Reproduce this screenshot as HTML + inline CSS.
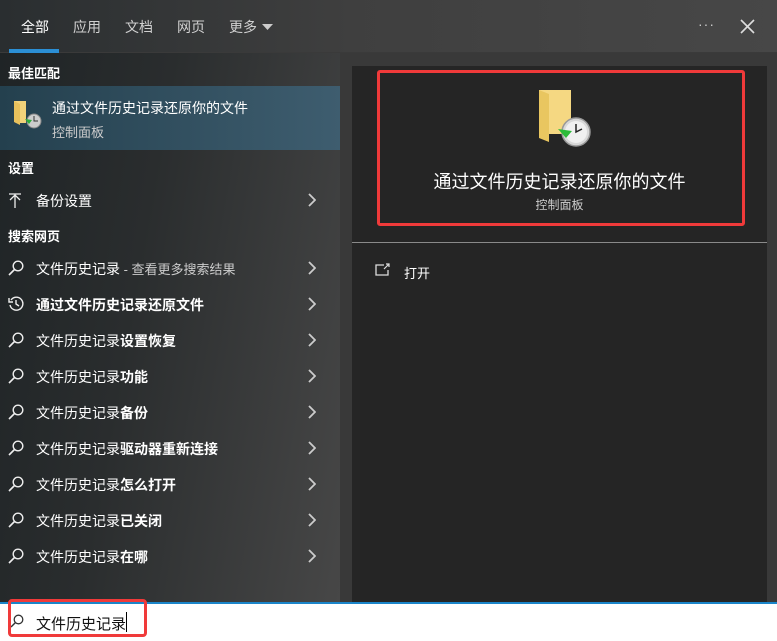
<!DOCTYPE html>
<html><head><meta charset="utf-8"><style>
*{margin:0;padding:0;box-sizing:border-box}
body{width:777px;height:641px;overflow:hidden;background:#2e2e2e;font-family:"Liberation Sans","Noto Sans CJK SC",sans-serif;color:#fff;position:relative;font-size:14px}
.top{position:absolute;left:0;top:0;width:777px;height:53px;background:linear-gradient(90deg,#2a2e30 0%,#3f3f3f 45%,#474747 100%);border-bottom:1px solid #3a3a3a}
.tab{position:absolute;top:17px;font-size:14px;color:#d0d0d0}
.left{position:absolute;left:0;top:53px;width:340px;height:549px;background:linear-gradient(100deg,#1f2426 0%,#2a2d2e 40%,#474747 100%)}
.right{position:absolute;left:340px;top:53px;width:437px;height:549px;background:#393939}
.card{position:absolute;left:352px;top:66px;width:415px;height:536px;background:#252525}
.abs{position:absolute}
.hdr{position:absolute;left:8px;font-size:13px;font-weight:bold;color:#fff}
.row{position:absolute;left:0;width:340px;height:36px}
.row .t{position:absolute;left:36px;top:9px;font-size:14px;color:#fff}
.row .chev{position:absolute;left:308px;top:11px}
.row svg.ic{position:absolute;left:8px;top:10px}
b{font-weight:bold}
</style></head><body>
<div class="top"></div>
<div class="tab" style="left:21px;color:#fff">全部</div>
<div class="abs" style="left:9px;top:49px;width:50px;height:4px;background:#2b8fd5"></div>
<div class="tab" style="left:73px">应用</div>
<div class="tab" style="left:125px">文档</div>
<div class="tab" style="left:177px">网页</div>
<div class="tab" style="left:229px">更多</div>
<svg class="abs" style="left:262px;top:24px" width="11" height="6"><path d="M0 0h11L5.5 6z" fill="#ccc"/></svg>
<div class="abs" style="left:698px;top:16px;color:#ccc;font-size:14px;letter-spacing:1px">···</div>
<svg class="abs" style="left:740px;top:19px" width="15" height="15"><path d="M1 1L14 14M14 1L1 14" stroke="#ddd" stroke-width="1.6"/></svg>

<div class="left"></div>
<div class="right"></div>
<div class="card"></div>

<div class="hdr" style="top:63px">最佳匹配</div>
<div class="abs" style="left:0;top:86px;width:340px;height:64px;background:linear-gradient(90deg,#24404e,#3e5d6f)"></div>
<svg class="abs" style="left:12px;top:99px" width="30" height="30" viewBox="0 0 30 30"><path d="M2 2h12v22H4L2 22z" fill="#f2d27a"/><path d="M2 2l6 3v21l-6-3z" fill="#e8c15c"/><circle cx="22" cy="22" r="7" fill="#ccc" stroke="#888"/><path d="M22 17v5h4" stroke="#333" fill="none"/><path d="M13 20l4 5 3-4z" fill="#2fae3a"/></svg>
<div class="abs" style="left:52px;top:98px;font-size:14px">通过文件历史记录还原你的文件</div>
<div class="abs" style="left:52px;top:122px;font-size:13px;color:#ccc">控制面板</div>

<div class="hdr" style="top:158px">设置</div>
<div class="row" style="top:182px"><svg class="ic" width="14" height="16"><path d="M7 2v14M1 2h12M2 8L7 3l5 5" stroke="#eee" fill="none" stroke-width="1.3"/></svg><span class="t">备份设置</span><svg class="chev" width="8" height="14"><path d="M1 1l6 6-6 6" stroke="#ccc" fill="none" stroke-width="1.8"/></svg></div>
<div class="hdr" style="top:226px">搜索网页</div>

<div class="row" style="top:250px"><svg class="ic" width="16" height="16"><circle cx="10" cy="6" r="4.8" stroke="#eee" fill="none" stroke-width="1.4"/><path d="M6.5 9.5L1 15" stroke="#eee" stroke-width="1.6"/></svg><span class="t">文件历史记录<span style="color:#ccc;font-size:13px"> - 查看更多搜索结果</span></span><svg class="chev" width="8" height="14"><path d="M1 1l6 6-6 6" stroke="#ccc" fill="none" stroke-width="1.8"/></svg></div>
<div class="row" style="top:286px"><svg class="ic" width="16" height="16"><path d="M3 4A6.5 6.5 0 1 1 2 9" stroke="#eee" fill="none" stroke-width="1.4"/><path d="M1 2v4h4M8 4v4l3 2" stroke="#eee" fill="none" stroke-width="1.4"/></svg><span class="t"><b>通过文件历史记录还原文件</b></span><svg class="chev" width="8" height="14"><path d="M1 1l6 6-6 6" stroke="#ccc" fill="none" stroke-width="1.8"/></svg></div>
<div class="row" style="top:322px"><svg class="ic" width="16" height="16"><circle cx="10" cy="6" r="4.8" stroke="#eee" fill="none" stroke-width="1.4"/><path d="M6.5 9.5L1 15" stroke="#eee" stroke-width="1.6"/></svg><span class="t">文件历史记录<b>设置恢复</b></span><svg class="chev" width="8" height="14"><path d="M1 1l6 6-6 6" stroke="#ccc" fill="none" stroke-width="1.8"/></svg></div>
<div class="row" style="top:358px"><svg class="ic" width="16" height="16"><circle cx="10" cy="6" r="4.8" stroke="#eee" fill="none" stroke-width="1.4"/><path d="M6.5 9.5L1 15" stroke="#eee" stroke-width="1.6"/></svg><span class="t">文件历史记录<b>功能</b></span><svg class="chev" width="8" height="14"><path d="M1 1l6 6-6 6" stroke="#ccc" fill="none" stroke-width="1.8"/></svg></div>
<div class="row" style="top:394px"><svg class="ic" width="16" height="16"><circle cx="10" cy="6" r="4.8" stroke="#eee" fill="none" stroke-width="1.4"/><path d="M6.5 9.5L1 15" stroke="#eee" stroke-width="1.6"/></svg><span class="t">文件历史记录<b>备份</b></span><svg class="chev" width="8" height="14"><path d="M1 1l6 6-6 6" stroke="#ccc" fill="none" stroke-width="1.8"/></svg></div>
<div class="row" style="top:430px"><svg class="ic" width="16" height="16"><circle cx="10" cy="6" r="4.8" stroke="#eee" fill="none" stroke-width="1.4"/><path d="M6.5 9.5L1 15" stroke="#eee" stroke-width="1.6"/></svg><span class="t">文件历史记录<b>驱动器重新连接</b></span><svg class="chev" width="8" height="14"><path d="M1 1l6 6-6 6" stroke="#ccc" fill="none" stroke-width="1.8"/></svg></div>
<div class="row" style="top:466px"><svg class="ic" width="16" height="16"><circle cx="10" cy="6" r="4.8" stroke="#eee" fill="none" stroke-width="1.4"/><path d="M6.5 9.5L1 15" stroke="#eee" stroke-width="1.6"/></svg><span class="t">文件历史记录<b>怎么打开</b></span><svg class="chev" width="8" height="14"><path d="M1 1l6 6-6 6" stroke="#ccc" fill="none" stroke-width="1.8"/></svg></div>
<div class="row" style="top:502px"><svg class="ic" width="16" height="16"><circle cx="10" cy="6" r="4.8" stroke="#eee" fill="none" stroke-width="1.4"/><path d="M6.5 9.5L1 15" stroke="#eee" stroke-width="1.6"/></svg><span class="t">文件历史记录<b>已关闭</b></span><svg class="chev" width="8" height="14"><path d="M1 1l6 6-6 6" stroke="#ccc" fill="none" stroke-width="1.8"/></svg></div>
<div class="row" style="top:538px"><svg class="ic" width="16" height="16"><circle cx="10" cy="6" r="4.8" stroke="#eee" fill="none" stroke-width="1.4"/><path d="M6.5 9.5L1 15" stroke="#eee" stroke-width="1.6"/></svg><span class="t">文件历史记录<b>在哪</b></span><svg class="chev" width="8" height="14"><path d="M1 1l6 6-6 6" stroke="#ccc" fill="none" stroke-width="1.8"/></svg></div>

<!-- right card content -->
<div class="abs" style="left:377px;top:70px;width:368px;height:156px;border:3px solid #f03a3a;border-radius:3px"></div>
<svg class="abs" style="left:537px;top:88px" width="56" height="60" viewBox="0 0 56 60"><path d="M2 2h32v44H12L2 42z" fill="#f5d882"/><path d="M2 2l10 4v48L2 50z" fill="#e9c660"/><circle cx="39" cy="44" r="14" fill="#d8d8d8" stroke="#999" stroke-width="1.5"/><circle cx="39" cy="44" r="11" fill="#f0f0f0"/><path d="M39 36v8l6-3" stroke="#222" fill="none" stroke-width="1.5"/><path d="M21 41l8 9 6-7z" fill="#2dbb3a"/></svg>
<div class="abs" style="left:352px;top:168px;width:415px;text-align:center;font-size:18px">通过文件历史记录还原你的文件</div>
<div class="abs" style="left:352px;top:196px;width:415px;text-align:center;font-size:12px;color:#ccc">控制面板</div>
<div class="abs" style="left:352px;top:242px;width:415px;height:1px;background:#8a8a8a"></div>
<svg class="abs" style="left:375px;top:263px" width="16" height="13"><path d="M9 2H1v10h12V7" stroke="#ddd" fill="none" stroke-width="1.3"/><path d="M9 6l5-5M11 1h3v3" stroke="#ddd" fill="none" stroke-width="1.2"/></svg>
<div class="abs" style="left:404px;top:263px;font-size:13px">打开</div>

<!-- search bar -->
<div class="abs" style="left:0;top:602px;width:777px;height:39px;background:#fff;border-top:2px solid #1b85c9"></div>
<svg class="abs" style="left:10px;top:614px" width="14" height="14"><circle cx="8.5" cy="5.5" r="4.3" stroke="#333" fill="none" stroke-width="1.3"/><path d="M5.5 8.5L1 13" stroke="#333" stroke-width="1.4"/></svg>
<div class="abs" style="left:36px;top:613px;font-size:15px;color:#111">文件历史记录</div>
<div class="abs" style="left:126px;top:612px;width:1px;height:20px;background:#000"></div>
<div class="abs" style="left:8px;top:599px;width:139px;height:38px;border:3px solid #f03a3a;border-radius:4px"></div>
</body></html>
